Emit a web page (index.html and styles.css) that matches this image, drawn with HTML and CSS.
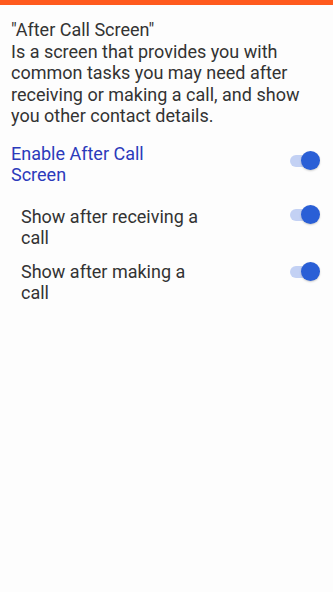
FILE: index.html
```html
<!DOCTYPE html>
<html>
<head>
<meta charset="utf-8">
<link rel="stylesheet" href="styles.css">
</head>
<body>
<div class="topbar"></div>
<main class="content">
  <p class="intro">"After Call Screen"<br>Is a screen that provides you with common tasks you may need after receiving or making a call, and show you other contact details.</p>
  <div class="pref pref-main">
    <span class="label label-main">Enable After Call Screen</span>
    <span class="switch switch-main"><span class="track"></span><span class="thumb"></span></span>
  </div>
  <div class="pref pref-sub pref-first">
    <span class="label">Show after receiving a call</span>
    <span class="switch switch-sub1"><span class="track"></span><span class="thumb"></span></span>
  </div>
  <div class="pref pref-sub pref-second">
    <span class="label">Show after making a call</span>
    <span class="switch switch-sub2"><span class="track"></span><span class="thumb"></span></span>
  </div>
</main>
</body>
</html>
```
FILE: styles.css
```css
html, body {
  margin: 0;
  padding: 0;
  background: #fdfdfd;
}
body {
  width: 333px;
  height: 592px;
  font-family: Roboto, "Noto Sans", sans-serif;
  color: #333333;
}
.topbar {
  height: 5px;
  background: #ff5a1e;
}
.content {
  padding: 14px 12px 0 11px;
}
.intro {
  margin: 0;
  font-size: 18px;
  line-height: 21.5px;
}
.pref {
  display: flex;
  align-items: flex-start;
  justify-content: space-between;
  font-size: 18px;
  line-height: 21px;
}
.pref-main {
  margin-top: 16.5px;
}
.pref-sub {
  padding-left: 10px;
}
.pref-first {
  margin-top: 21px;
}
.pref-second {
  margin-top: 13px;
}
.label {
  width: 186px;
}
.label-main {
  color: #2b3abb;
}
.switch {
  position: relative;
  width: 31px;
  height: 19px;
  flex: none;
  margin-right: 1px;
}
.switch-main { margin-top: 8px; }
.switch-sub1 { margin-top: -1px; }
.switch-sub2 { margin-top: 1px; }
.track {
  position: absolute;
  left: 1px;
  top: 3.5px;
  width: 27px;
  height: 12px;
  border-radius: 6px;
  background: #c3d1f4;
}
.thumb {
  position: absolute;
  right: 0;
  top: 0;
  width: 19px;
  height: 19px;
  border-radius: 50%;
  background: #2a5fd6;
  box-shadow: 0 1px 2px rgba(0, 0, 0, 0.2);
}
```
